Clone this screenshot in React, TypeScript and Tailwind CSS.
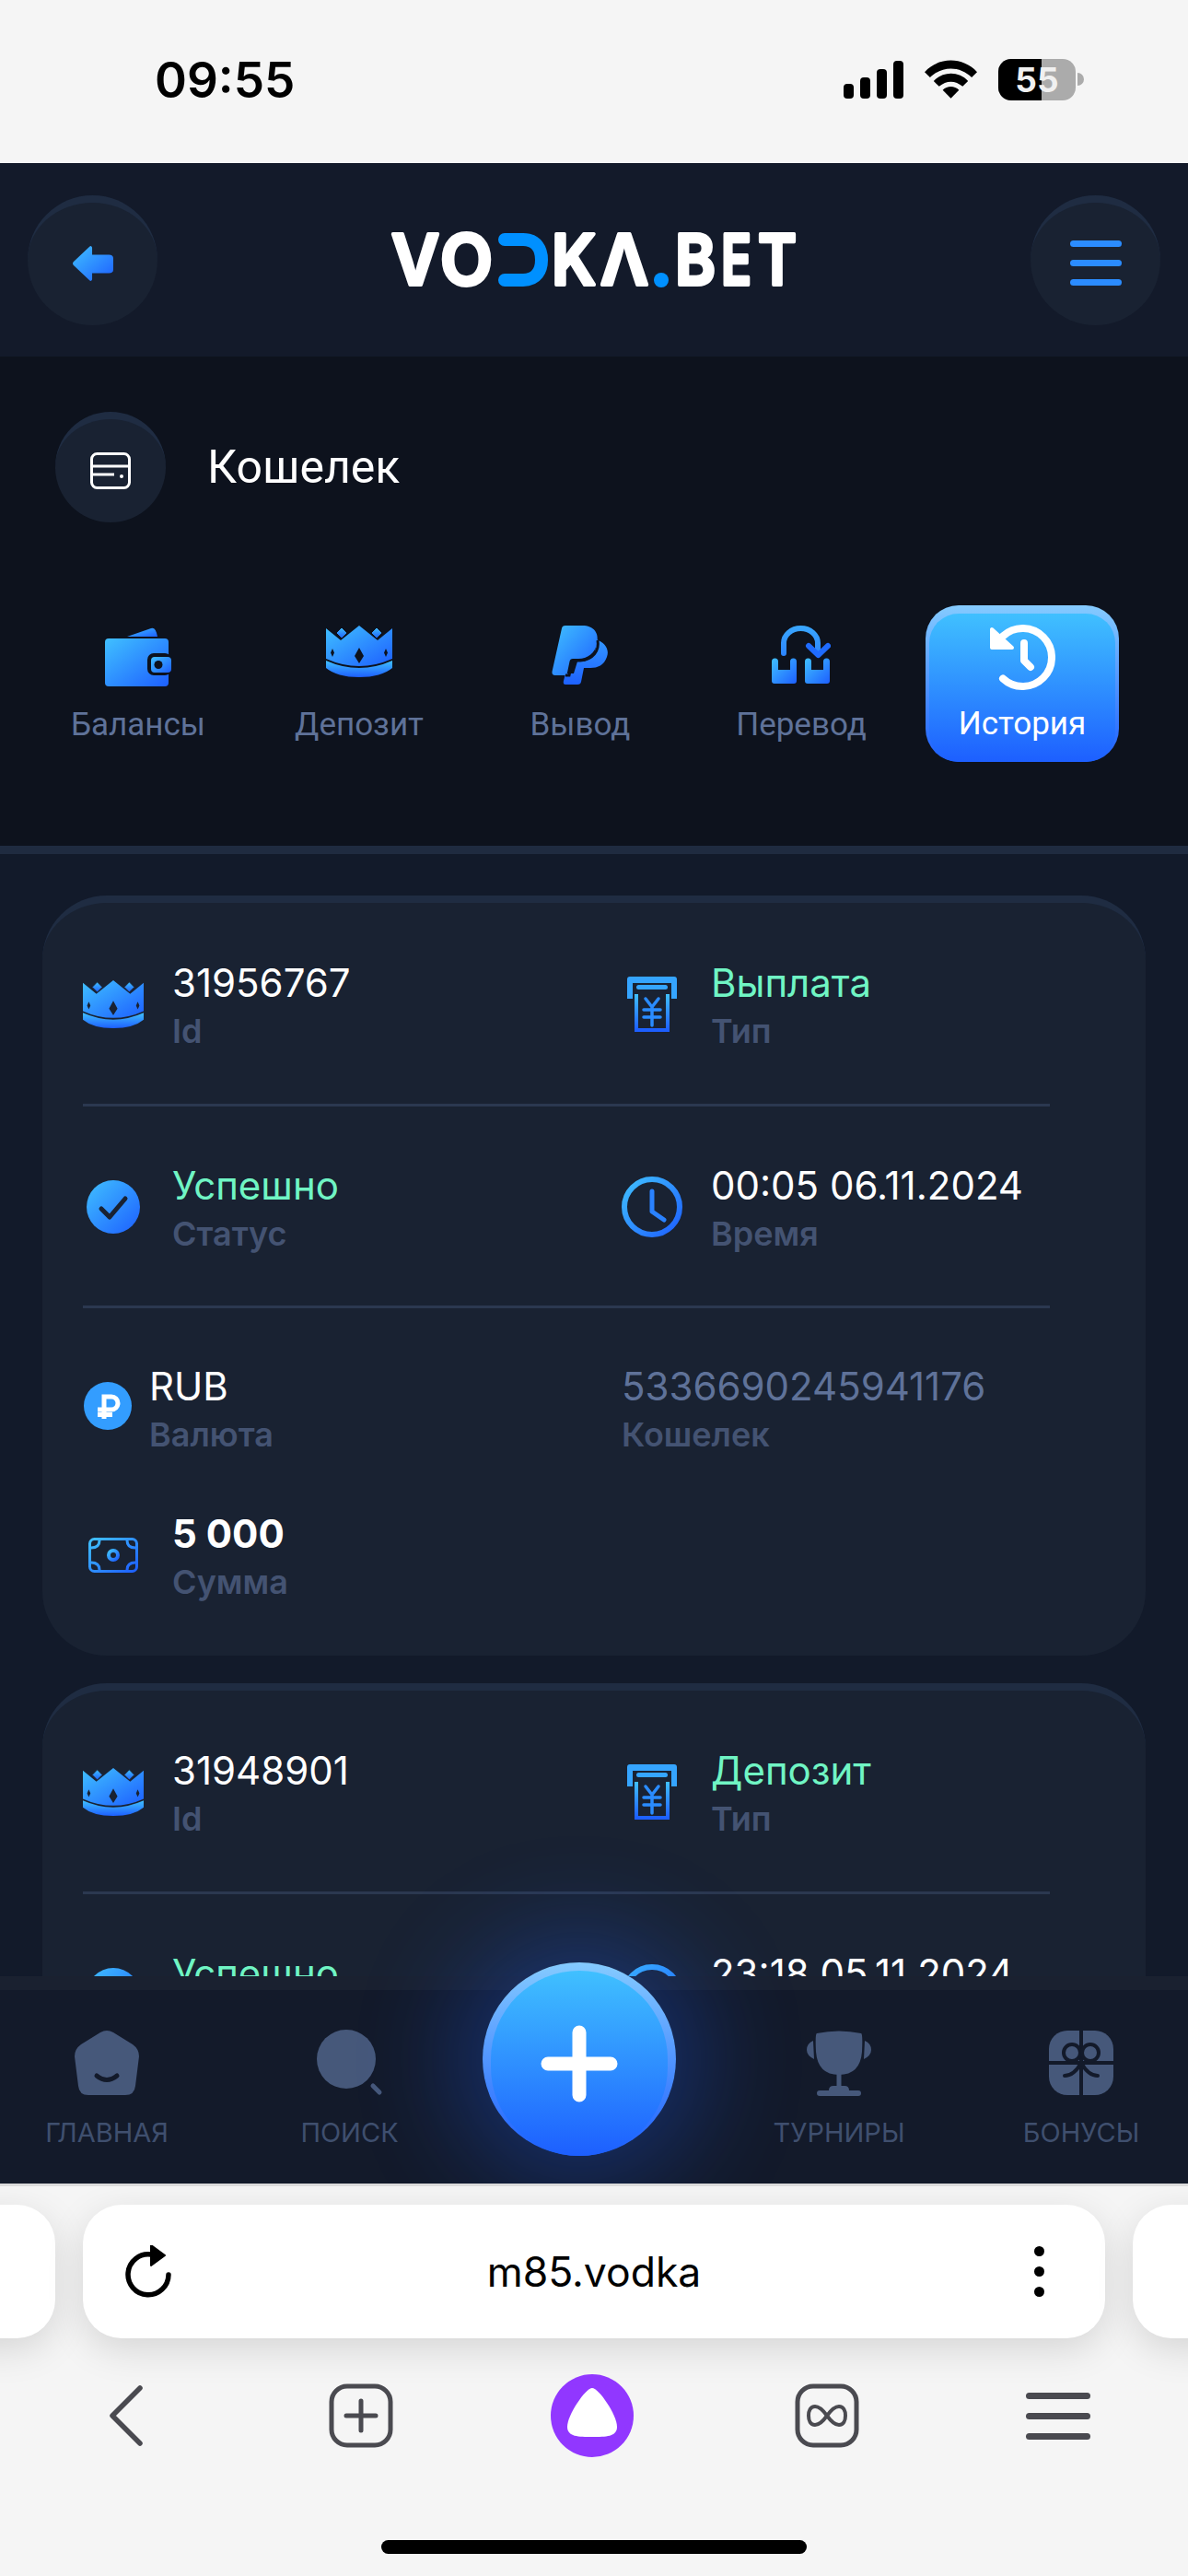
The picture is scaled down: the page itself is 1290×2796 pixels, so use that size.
import type { ReactNode } from "react";

const roboto = "font-['Roboto',sans-serif]";
const inter = "font-['Inter',sans-serif]";

// shared gradients, referenced by every blue icon
const GradientDefs = () => (
  <svg className="absolute w-0 h-0" aria-hidden="true">
    <defs>
      <linearGradient id="diag" x1="0" y1="0" x2="1" y2="1">
        <stop offset="0" stopColor="#40c0ff" />
        <stop offset="1" stopColor="#1d5fff" />
      </linearGradient>
      <linearGradient id="vert" x1="0" y1="0" x2="0" y2="1">
        <stop offset="0" stopColor="#40c0ff" />
        <stop offset="1" stopColor="#1d5fff" />
      </linearGradient>
      <linearGradient id="vertUser" gradientUnits="userSpaceOnUse" x1="0" y1="0" x2="0" y2="66">
        <stop offset="0" stopColor="#3aa8ff" />
        <stop offset="1" stopColor="#1d5fff" />
      </linearGradient>
    </defs>
  </svg>
);

const WalletIcon = () => (
  <svg width="72" height="66" viewBox="0 0 72 66">
    <path d="M24 12 L50 3 Q55 1 57 12 Z" fill="url(#diag)" />
    <rect x="0" y="14" width="69" height="52" rx="4" fill="url(#diag)" />
    <rect x="46" y="30" width="26" height="24" rx="7" fill="#0d121d" />
    <rect x="50" y="34" width="22" height="17" rx="4" fill="url(#diag)" />
    <circle cx="58" cy="42.500" r="4.500" fill="#0d121d" />
  </svg>
);

const CrownIcon = ({ w = 72, h = 56, cut = "#0d121d" }: { w?: number; h?: number; cut?: string }) => (
  <svg width={w} height={h} viewBox="0 0 72 56" preserveAspectRatio="none">
    <path d="M0 3 L16 16 L36 0 L56 16 L72 3 V36 Q36 52 0 36 Z" fill="url(#diag)" />
    <path d="M0 38 Q36 54 72 38 V46 Q60 56 36 56 Q12 56 0 46 Z" fill="url(#vert)" />
    <path d="M17 2 L23 8 L17 14 L11 8 Z M55 2 L61 8 L55 14 L49 8 Z" fill="url(#vert)" stroke={cut} strokeWidth="1" />
    <path d="M36 24 L41 33 L36 41 L31 33 Z M7 25 L9 29.500 L7 34 L5 29.500 Z M65 25 L67 29.500 L65 34 L63 29.500 Z" fill={cut} />
  </svg>
);

const PaypalIcon = () => (
  <svg width="62" height="64" viewBox="0 0 62 64">
    <path d="M48 15 C58 18 63 26 60 34 C57 43 50 46 42 46 H35 L32 61 Q31.500 64 28 64 H15 Q12 64 13 60 L15 52 H24 L28 39 H32 C42 39 50 30 48 15 Z" fill="url(#vertUser)" />
    <path d="M11 3 Q11.500 0 15 0 H33 C46 0 52 8 49 20 C47 30 39 36 29 36 H23 Q20 36 19.500 39 L17 51 Q16.500 54 14 54 H4 Q0 54 0.500 50 Z" fill="url(#diag)" />
    <path d="M50 16 C52 27 45 37 31 38 H26 Q23 38 22 41 L19 54 H15" fill="none" stroke="#0d121d" strokeWidth="3" />
  </svg>
);

const TransferIcon = () => (
  <svg width="64" height="64" viewBox="0 0 64 64">
    <path d="M13 30 V19 A18.500 16 0 0 1 50 19 V30" fill="none" stroke="url(#vertUser)" strokeWidth="6" strokeLinecap="round" />
    <path d="M40 22 L50.500 32 L61 22" fill="none" stroke="#1f6bff" strokeWidth="6" strokeLinecap="round" strokeLinejoin="round" />
    <path d="M0 39 a3.500 3.500 0 0 1 7 0 V48 H20 V39 a3.500 3.500 0 0 1 7 0 V60 q0 3 -3 3 H3 q-3 0 -3 -3 Z" fill="url(#diag)" />
    <path d="M36 39 a3.500 3.500 0 0 1 7 0 V48 H56 V39 a3.500 3.500 0 0 1 7 0 V60 q0 3 -3 3 H39 q-3 0 -3 -3 Z" fill="url(#diag)" />
  </svg>
);

const HistoryIcon = () => (
  <svg width="71" height="71" viewBox="0 0 71 71" fill="none" stroke="#fff" strokeWidth="8" strokeLinecap="round" strokeLinejoin="round">
    <path d="M14 12.500 A31.500 31.500 0 1 1 14 58.500" />
    <path d="M2 5 V25 H24 Z" fill="#fff" strokeWidth="4" />
    <path d="M37 20 V39 L44 46" />
  </svg>
);

const ReceiptIcon = () => (
  <svg width="54" height="60" viewBox="0 0 54 60" fill="none">
    <path d="M0 3 Q0 0 3 0 H51 Q54 0 54 3 V24 H48 V7 H6 V24 H0 Z" fill="#35a5ff" />
    <rect x="10" y="9" width="34" height="5" rx="2.500" fill="#35a5ff" />
    <path d="M10 19 V58 H44 V19" stroke="url(#vert)" strokeWidth="4" />
    <path d="M20 24 L27 33 L34 24 M27 33 V53 M18 36 H36 M18 44 H36" stroke="#2a8cff" strokeWidth="3.500" strokeLinecap="round" />
  </svg>
);

const CheckIcon = () => (
  <svg width="58" height="58" viewBox="0 0 58 58">
    <circle cx="29" cy="29" r="29" fill="url(#diag)" />
    <path d="M16 31 L25 40 L42 20" fill="none" stroke="#192232" strokeWidth="5" strokeLinecap="round" strokeLinejoin="round" />
  </svg>
);

const ClockIcon = () => (
  <svg width="66" height="66" viewBox="0 0 66 66" fill="none">
    <circle cx="33" cy="33" r="30" stroke="url(#diag)" strokeWidth="6" />
    <path d="M33 16 V38 L46 47" stroke="#2a82ff" strokeWidth="5" strokeLinecap="round" strokeLinejoin="round" />
  </svg>
);

const RubleIcon = () => (
  <svg width="52" height="52" viewBox="0 0 52 52">
    <circle cx="26" cy="26" r="26" fill="#339dff" />
    <path d="M22 40 V16 H30 a7 7 0 0 1 0 14 H15 M15 35.500 H31" fill="none" stroke="#fff" strokeWidth="5" />
  </svg>
);

const MoneyIcon = () => (
  <svg width="54" height="38" viewBox="0 0 54 38" fill="none">
    <rect x="1.500" y="1.500" width="51" height="35" rx="5" stroke="url(#diag)" strokeWidth="3" />
    <path d="M3 11 Q12 11 12 3 M42 3 Q42 11 51 11 M3 27 Q12 27 12 35 M42 35 Q42 27 51 27" stroke="url(#diag)" strokeWidth="3" />
    <circle cx="27" cy="19" r="5" stroke="url(#diag)" strokeWidth="4" />
  </svg>
);

const Logo = () => {
  const common = {
    fontSize: 76,
    fontWeight: 600,
    fill: "#fff",
    stroke: "#fff",
    strokeWidth: 4,
    strokeLinejoin: "round" as const,
    lengthAdjust: "spacingAndGlyphs" as const,
    className: inter,
  };
  return (
    <svg width="444" height="96" viewBox="0 0 444 96">
      <g transform="translate(0 17)">
        <text {...common} x="2" y="58" textLength="52">V</text>
        <text {...common} x="55" y="58" textLength="57">O</text>
        <path d="M125 9 H145 C160 9 165 20 165 31 C165 42 160 53 145 53 H125" fill="none" stroke="#0090ff" strokeWidth="14" strokeLinecap="round" />
        <text {...common} x="176" y="58" textLength="48">K</text>
        <text {...common} x="229" y="58" textLength="52">Λ</text>
        <circle cx="295" cy="53" r="8" fill="#0090ff" />
        <text {...common} x="310" y="58" textLength="44">B</text>
        <text {...common} x="360" y="58" textLength="33">E</text>
        <text {...common} x="400" y="58" textLength="42">T</text>
      </g>
    </svg>
  );
};

// circle with a lighter top edge, used in the header and for the wallet title
const RoundButton = ({ size, children }: { size: string; children: ReactNode }) => (
  <div className={`${size} shrink-0 flex items-center justify-center rounded-full bg-[#192232] border-t-[8px] border-[#1f2c42]`}>
    {children}
  </div>
);

const tabs = [
  { label: "Балансы", icon: <WalletIcon /> },
  { label: "Депозит", icon: <CrownIcon /> },
  { label: "Вывод", icon: <PaypalIcon /> },
  { label: "Перевод", icon: <TransferIcon /> },
];

const Cell = ({
  icon,
  value,
  label,
  valueClass = "text-white",
  iconBox = "w-[66px] mb-[6px]",
  gap = "gap-[31px]",
}: {
  icon?: ReactNode;
  value: string;
  label: string;
  valueClass?: string;
  iconBox?: string;
  gap?: string;
}) => (
  <div className={`flex items-center ${gap}`}>
    {icon && <div className={`${iconBox} shrink-0 flex justify-center`}>{icon}</div>}
    <div className="flex flex-col">
      <span className={`text-[42px] leading-[52px] ${valueClass}`}>{value}</span>
      <span className="text-[36px] leading-[52px] font-semibold text-[#445372]">{label}</span>
    </div>
  </div>
);

const Divider = () => <div className="h-[3px] w-[1050px] bg-[#2b3850]" />;

const Card = ({ id, type, status, time }: { id: string; type: string; status: string; time: string }) => (
  <div className={`mx-[46px] rounded-[70px] bg-[#192232] border-t-[8px] border-[#1f2c42] pl-[44px] pt-[57px] pb-[50px] ${inter}`}>
    <div className="grid grid-cols-[585px_1fr] h-[112px] items-center">
      <Cell icon={<CrownIcon w={66} h={52} cut="#192232" />} value={id} label="Id" />
      <Cell icon={<ReceiptIcon />} value={type} label="Тип" valueClass="text-[#70f5c4]" />
    </div>
    <div className="mt-[49px] mb-[56px]">
      <Divider />
    </div>
    <div className="grid grid-cols-[585px_1fr] h-[112px] items-center">
      <Cell icon={<CheckIcon />} value={status} label="Статус" valueClass="text-[#70f5c4]" />
      <Cell icon={<ClockIcon />} value={time} label="Время" />
    </div>
    <div className="mt-[48px] mb-[55px]">
      <Divider />
    </div>
    <div className="grid grid-cols-[585px_1fr] h-[112px] items-center">
      <Cell icon={<RubleIcon />} value="RUB" label="Валюта" iconBox="w-[54px] mb-[10px]" gap="gap-[18px]" />
      <Cell value="5336690245941176" label="Кошелек" valueClass="text-[#5f7299]" />
    </div>
    <div className="mt-[48px] h-[112px] flex items-center">
      <Cell icon={<MoneyIcon />} value="5 000" label="Сумма" valueClass="text-white font-bold" />
    </div>
  </div>
);

const HomeIcon = () => (
  <svg width="70" height="70" viewBox="0 0 70 70">
    <path d="M28 2 Q35 -2 42 2 L63 15 Q70 20 70 28 L66 60 Q65 70 55 70 H15 Q5 70 4 60 L0 28 Q0 20 7 15 Z" fill="#46587a" />
    <path d="M24 49 Q35 58 46 49" fill="none" stroke="#131a2a" strokeWidth="5" strokeLinecap="round" />
  </svg>
);

const SearchIcon = () => (
  <svg width="72" height="72" viewBox="0 0 72 72">
    <circle cx="32" cy="32" r="32" fill="#46587a" />
    <path d="M61 61 L68 68" stroke="#46587a" strokeWidth="5" strokeLinecap="round" />
  </svg>
);

const CupIcon = () => (
  <svg width="70" height="72" viewBox="0 0 70 72" fill="#46587a">
    <path d="M11 4 Q35 -1 59 4 Q61 4 60 24 Q58 49 35 49 Q12 49 10 24 Q9 4 11 4 Z" />
    <path d="M7 12 Q0 15 0 22 Q0 28 8 32 Z M63 12 Q70 15 70 22 Q70 28 62 32 Z" />
    <rect x="32.500" y="48" width="5" height="15" />
    <path d="M24 66 Q24 61 29 61 H41 Q46 61 46 66 Z" />
    <rect x="11" y="66" width="48" height="6" rx="3" />
  </svg>
);

const GiftIcon = () => (
  <svg width="70" height="70" viewBox="0 0 70 70" fill="none">
    <rect width="70" height="70" rx="20" fill="#46587a" />
    <path d="M35 0 V70 M0 35 H70" stroke="#131a2a" strokeWidth="4" />
    <circle cx="25" cy="24" r="9" stroke="#131a2a" strokeWidth="4" />
    <circle cx="45" cy="24" r="9" stroke="#131a2a" strokeWidth="4" />
    <path d="M35 35 C30 44 24 49 17 49 M35 35 C40 44 46 49 53 49" stroke="#131a2a" strokeWidth="4" strokeLinecap="round" />
  </svg>
);

const NavItem = ({ icon, label, className }: { icon: ReactNode; label: string; className: string }) => (
  <div className={`flex flex-col items-center ${className}`}>
    <div className="h-[72px] flex items-center">{icon}</div>
    <span className={`mt-[22px] text-[29px] leading-[36px] text-[#3f4f6e] ${inter}`}>{label}</span>
  </div>
);

const BottomNav = () => (
  <div className="absolute left-0 right-0 top-[2145px] h-[225px] bg-[#131a2a] border-t-[15px] border-[#1a2130] flex">
    <div className="pt-[43px] w-[232px] flex justify-center">
      <NavItem icon={<HomeIcon />} label="ГЛАВНАЯ" className="" />
    </div>
    <div className="pt-[43px] w-[292px] flex justify-center">
      <NavItem icon={<SearchIcon />} label="ПОИСК" className="pl-[3px]" />
    </div>
    <div className="w-[212px] relative">
      <div className="absolute left-0 top-[-30px] w-[210px] h-[210px] rounded-full p-[9px] pb-0 bg-[linear-gradient(180deg,#85cbff,#1d5fff)] shadow-[0_0_110px_30px_rgba(30,95,255,0.3)]">
        <div className="w-full h-full rounded-full bg-[linear-gradient(180deg,#40c0ff,#1d5fff)] flex items-center justify-center">
          <svg width="84" height="84" viewBox="0 0 84 84">
            <path d="M42 8 V76 M8 42 H76" stroke="#fff" strokeWidth="15" strokeLinecap="round" />
          </svg>
        </div>
      </div>
    </div>
    <div className="pt-[43px] w-[290px] flex justify-center">
      <NavItem icon={<CupIcon />} label="ТУРНИРЫ" className="pl-[60px]" />
    </div>
    <div className="pt-[43px] pl-[32px] w-[264px] flex justify-center">
      <NavItem icon={<GiftIcon />} label="БОНУСЫ" className="" />
    </div>
  </div>
);

const StatusBar = () => (
  <div className="h-[177px] bg-[#f5f5f5] flex justify-between pl-[168px] pr-[122px] pt-[62px]">
    <span className={`${inter} font-semibold text-[53px] leading-[50px] text-black`}>09:55</span>
    <div className="flex items-start gap-[23px] pt-[2px]">
      <svg width="65" height="41" viewBox="0 0 65 41" className="mt-[2px]">
        <rect x="0" y="25" width="11" height="16" rx="4" />
        <rect x="18" y="18" width="11" height="23" rx="4" />
        <rect x="36" y="9" width="11" height="32" rx="4" />
        <rect x="54" y="0" width="11" height="41" rx="4" />
      </svg>
      <svg width="57" height="42" viewBox="0 0 58 42" className="mt-[1px]">
        <path d="M0 13 C16 -4 42 -4 58 13 L52 19 C39 6 19 6 6 19 Z" />
        <path d="M10 23 C20 12 38 12 48 23 L42 29 C34 22 24 22 16 29 Z" />
        <path d="M20 33 C25 28 33 28 38 33 L29 42 Z" />
      </svg>
      <div className="relative w-[84px] h-[45px] rounded-[14px] overflow-hidden bg-[#ababab] flex items-center justify-center">
        <div className="absolute left-0 top-0 bottom-0 w-[47px] bg-black" />
        <span className={`relative ${inter} font-bold text-[37px] leading-[45px] text-[#f0f0f0]`}>55</span>
      </div>
    </div>
    <div className="absolute left-[1170px] top-[79px] w-[7px] h-[14px] rounded-r-full bg-[#ababab]" />
  </div>
);

const BrowserBar = () => (
  <div className="absolute left-0 right-0 top-[2370px] h-[426px] bg-[#f5f5f5] border-t-[3px] border-[#dcdcdc]">
    <div className="flex gap-[30px] ml-[-1050px] w-[3390px] mt-[20px]">
      <div className="w-[1110px] h-[145px] rounded-[42px] bg-white shadow-[0_12px_40px_rgba(0,0,0,0.13)]" />
      <div className="w-[1110px] h-[145px] rounded-[42px] bg-white shadow-[0_12px_40px_rgba(0,0,0,0.13)] flex items-center px-[46px]">
        <div className="w-[60px]">
          <svg width="50" height="58" viewBox="0 0 50 58" fill="none">
            <path d="M28 10 A22 22 0 1 0 47 32" stroke="#000" strokeWidth="5.500" strokeLinecap="round" />
            <path d="M28 0 L43 11 L28 22 Z" fill="#000" stroke="#000" strokeWidth="2" strokeLinejoin="round" />
          </svg>
        </div>
        <span className={`flex-1 text-center ${inter} text-[44.500px] leading-[56px] text-black`}>m85.vodka</span>
        <div className="w-[60px] flex flex-col items-end gap-[11px] pr-[20px]">
          <div className="w-[11px] h-[11px] rounded-full bg-black" />
          <div className="w-[11px] h-[11px] rounded-full bg-black" />
          <div className="w-[11px] h-[11px] rounded-full bg-black" />
        </div>
      </div>
      <div className="w-[1110px] h-[145px] rounded-[42px] bg-white shadow-[0_12px_40px_rgba(0,0,0,0.13)]" />
    </div>
    <div className="grid grid-cols-5 w-[1265px] ml-[10px] h-[90px] mt-[39px] items-center justify-items-center">
      <svg width="36" height="66" viewBox="0 0 36 66" fill="none">
        <path d="M33 3 L3 33 L33 63" stroke="#4a4a50" strokeWidth="5.500" strokeLinecap="round" strokeLinejoin="round" />
      </svg>
      <div className="pl-[5px]">
        <svg width="70" height="70" viewBox="0 0 70 70" fill="none">
          <rect x="3" y="3" width="64" height="64" rx="17" stroke="#4a4a50" strokeWidth="5" />
          <path d="M35 19 V51 M19 35 H51" stroke="#4a4a50" strokeWidth="5" strokeLinecap="round" />
        </svg>
      </div>
      <svg width="90" height="90" viewBox="0 0 90 90">
        <circle cx="45" cy="45" r="45" fill="#9137ff" />
        <path d="M45 15 C52 15 72 44 72 57 C72 68 60 68 45 68 C30 68 18 68 18 57 C18 44 38 15 45 15 Z" fill="#fff" />
      </svg>
      <div className="pl-[5px]">
        <svg width="70" height="70" viewBox="0 0 70 70" fill="none">
          <rect x="3" y="3" width="64" height="64" rx="17" stroke="#4a4a50" strokeWidth="5" />
          <path d="M35 35 C30 28 26 25 22 25 C17 25 15 30 15 35 C15 40 17 45 22 45 C26 45 30 42 35 35 C40 28 44 25 48 25 C53 25 55 30 55 35 C55 40 53 45 48 45 C44 45 40 42 35 35 Z" stroke="#4a4a50" strokeWidth="4" />
        </svg>
      </div>
      <div className="flex flex-col gap-[15px] w-[70px]">
        <div className="h-[7px] rounded-full bg-[#4a4a50]" />
        <div className="h-[7px] rounded-full bg-[#4a4a50]" />
        <div className="h-[7px] rounded-full bg-[#4a4a50]" />
      </div>
    </div>
    <div className="absolute left-[414px] top-[384px] w-[462px] h-[15px] rounded-full bg-black" />
  </div>
);

const App = () => {
  return (
    <div className={`relative w-[1290px] h-[2796px] overflow-hidden bg-[#121a2a] ${roboto}`}>
      <GradientDefs />
      <StatusBar />
      {/* ヘッダー */}
      <header className="h-[210px] bg-[#131a2a] flex items-center justify-between px-[30px]">
        <RoundButton size="w-[141px] h-[141px]">
          <svg width="44" height="40" viewBox="0 0 46 40">
            <path d="M19 1 Q21 -1 22 2 V10 H41 Q46 10 46 14 V27 Q46 31 41 31 H22 V38 Q21 41 19 39 L1 22 Q-1 20 1 18 Z" fill="url(#diag)" />
          </svg>
        </RoundButton>
        <Logo />
        <RoundButton size="w-[141px] h-[141px]">
          <div className="flex flex-col gap-[14px] w-[56px] mt-[-2px]">
            <div className="h-[7px] rounded-full bg-[#2b8cff]" />
            <div className="h-[7px] rounded-full bg-[#2b8cff]" />
            <div className="h-[7px] rounded-full bg-[#2b8cff]" />
          </div>
        </RoundButton>
      </header>

      {/* 見出しとタブ */}
      <section className="h-[540px] bg-[#0d121d] pt-[60px] border-b-[9px] border-[#1f2b40]">
        <div className="flex items-center gap-[45px] pl-[60px]">
          <RoundButton size="w-[120px] h-[120px]">
            <svg width="44" height="40" viewBox="0 0 44 40" fill="none" stroke="#fff" strokeWidth="3">
              <rect x="1.500" y="1.500" width="41" height="37" rx="6" />
              <path d="M2 15 H42 M2 24 H26" />
              <circle cx="34" cy="26" r="2" fill="#fff" stroke="none" />
            </svg>
          </RoundButton>
          <span className="text-[50px] leading-[60px] font-normal text-white">Кошелек</span>
        </div>
        <div className="flex pl-[30px] mt-[90px]">
          {tabs.map((tab) => (
            <div key={tab.label} className="w-[240px] h-[170px] flex flex-col items-center">
              <div className="h-[100px] pt-[22px] flex items-start">{tab.icon}</div>
              <span className="mt-[10px] text-[35px] leading-[40px] text-[#5f7299]">{tab.label}</span>
            </div>
          ))}
          <div className="w-[210px] h-[170px] ml-[15px] rounded-[36px] px-[4px] pt-[9px] bg-[linear-gradient(180deg,#85cbff,#1d5fff)]">
            <div className="h-full rounded-[32px] bg-[linear-gradient(180deg,#40c0ff,#1d5fff)] flex flex-col items-center">
              <div className="h-[95px] pt-[12px]">
                <HistoryIcon />
              </div>
              <span className="mt-[5px] text-[35px] leading-[40px] text-white">История</span>
            </div>
          </div>
        </div>
      </section>

      <main className="pt-[45px] flex flex-col gap-[30px]">
        <Card id="31956767" type="Выплата" status="Успешно" time="00:05 06.11.2024" />
        <Card id="31948901" type="Депозит" status="Успешно" time="23:18 05.11.2024" />
      </main>

      <BottomNav />
      <BrowserBar />
    </div>
  );
};

export default App;
